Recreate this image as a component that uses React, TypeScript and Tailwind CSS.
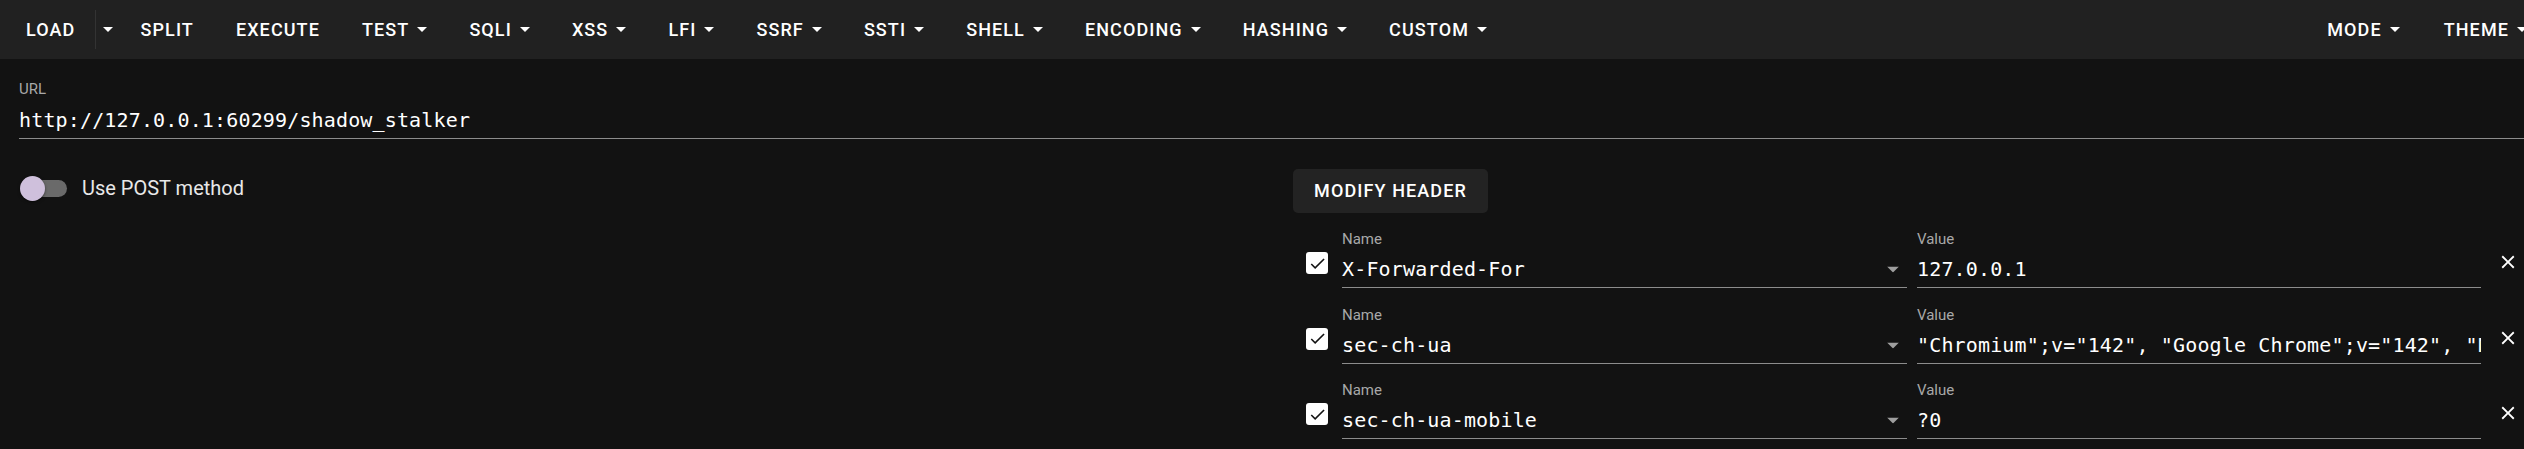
const menus = ['TEST', 'SQLI', 'XSS', 'LFI', 'SSRF', 'SSTI', 'SHELL', 'ENCODING', 'HASHING', 'CUSTOM']

const headers = [
  { name: 'X-Forwarded-For', value: '127.0.0.1' },
  { name: 'sec-ch-ua', value: '"Chromium";v="142", "Google Chrome";v="142", "Not_A Brand";v="99"' },
  { name: 'sec-ch-ua-mobile', value: '?0' },
]

const btn = "font-['Roboto',sans-serif] text-[18px] font-medium uppercase tracking-[1.1px] text-white leading-none whitespace-nowrap"
const mono = "font-['DejaVu_Sans_Mono','Liberation_Mono',monospace] text-[20px] tracking-[0.15px] text-white"
const label = "font-['Roboto',sans-serif] text-[15px] leading-[15px] text-[#a8a8a8]"

function Caret({ className = '' }: { className?: string }) {
  return (
    <svg viewBox="7 10 10 5" width="10" height="5" className={className}>
      <path d="M7 10l5 5 5-5z" fill="currentColor" />
    </svg>
  )
}

function MenuButton({ text }: { text: string }) {
  return (
    <button className={`flex items-center gap-[8px] px-[10px] py-[8px] ${btn}`}>
      {text}
      <Caret className="text-white" />
    </button>
  )
}

function Toolbar() {
  return (
    <div className="flex h-[59px] items-center overflow-hidden bg-[#212121] pl-[16px]">
      <div className="flex items-center">
        <button className={`px-[10px] py-[8px] ${btn}`}>Load</button>
        <div className="ml-[10px] h-[39px] w-px bg-[#333]" />
        <button className="px-[7px] py-[12px] text-white">
          <Caret />
        </button>
      </div>
      <button className={`ml-[10px] px-[10px] py-[8px] ${btn}`}>Split</button>
      <button className={`ml-[22px] px-[10px] py-[8px] ${btn}`}>Execute</button>
      <div className="ml-[22px] flex items-center gap-[22px]">
        {menus.map((m) => (
          <MenuButton key={m} text={m} />
        ))}
      </div>
      <div className="ml-auto mr-[-13px] flex items-center gap-[24px]">
        <MenuButton text="Mode" />
        <MenuButton text="Theme" />
      </div>
    </div>
  )
}

function HeaderRow({ name, value }: { name: string; value: string }) {
  return (
    <div className="flex h-[75.6px] items-start">
      <div className="ml-[13px] mt-[20px] flex h-[22px] w-[22px] items-center justify-center rounded-[3px] bg-white">
        <svg viewBox="0 0 24 24" width="19" height="19">
          <path d="M9 16.17 4.83 12l-1.42 1.41L9 19 21 7l-1.41-1.41z" fill="#121212" />
        </svg>
      </div>
      <div className="ml-[14px] flex w-[565px] flex-col">
        <span className={label}>Name</span>
        <div className="mt-[8px] flex h-[33px] items-start border-b border-[#8c8c8c] pb-[4px]">
          <span className={`flex-1 leading-[28px] ${mono}`}>{name}</span>
          <Caret className="mr-[9px] mt-[12px] scale-[1.2] text-[#9e9e9e]" />
        </div>
      </div>
      <div className="ml-[10px] flex w-[564px] flex-col">
        <span className={label}>Value</span>
        <div className="mt-[8px] h-[33px] overflow-hidden border-b border-[#8c8c8c] pb-[4px]">
          <span className={`block whitespace-pre leading-[28px] ${mono}`}>{value}</span>
        </div>
      </div>
      <button className="ml-[16px] mt-[19px] text-white">
        <svg viewBox="0 0 24 24" width="22" height="22">
          <path
            d="M19 6.41 17.59 5 12 10.59 6.41 5 5 6.41 10.59 12 5 17.59 6.41 19 12 13.41 17.59 19 19 17.59 13.41 12z"
            fill="currentColor"
          />
        </svg>
      </button>
    </div>
  )
}

export default function App() {
  return (
    <div className="min-h-screen bg-[#121212]">
      <Toolbar />
      <div className="pl-[19px]">
        <div className="flex flex-col pt-[23px]">
          <span className={label}>URL</span>
          <div className="mt-[9px] border-b border-[#8c8c8c] pb-[4px]">
            <span className={`block leading-[28px] ${mono}`}>http://127.0.0.1:60299/shadow_stalker</span>
          </div>
        </div>
        <div className="grid grid-cols-[1244px_1fr] gap-x-[30px]">
          <div className="flex items-start pt-[37px]">
            <div className="relative flex h-[25px] w-[48px] items-center">
              <div className="ml-[6px] h-[17px] w-[42px] rounded-full bg-[#6a6a6a]" />
              <div className="absolute left-[1px] top-0 h-[25px] w-[25px] rounded-full bg-[#cfc0dc] shadow-[0_1px_3px_rgba(0,0,0,0.5)]" />
            </div>
            <span className="ml-[15px] font-['Roboto',sans-serif] text-[20px] leading-[25px] text-[#e8e8e8]">
              Use POST method
            </span>
          </div>
          <div className="flex flex-col pt-[30px]">
            <button className={`h-[44px] w-[195px] rounded-[5px] bg-[#232323] ${btn}`}>Modify header</button>
            <div className="mt-[19px] flex flex-col">
              {headers.map((h) => (
                <HeaderRow key={h.name} {...h} />
              ))}
            </div>
          </div>
        </div>
      </div>
    </div>
  )
}
